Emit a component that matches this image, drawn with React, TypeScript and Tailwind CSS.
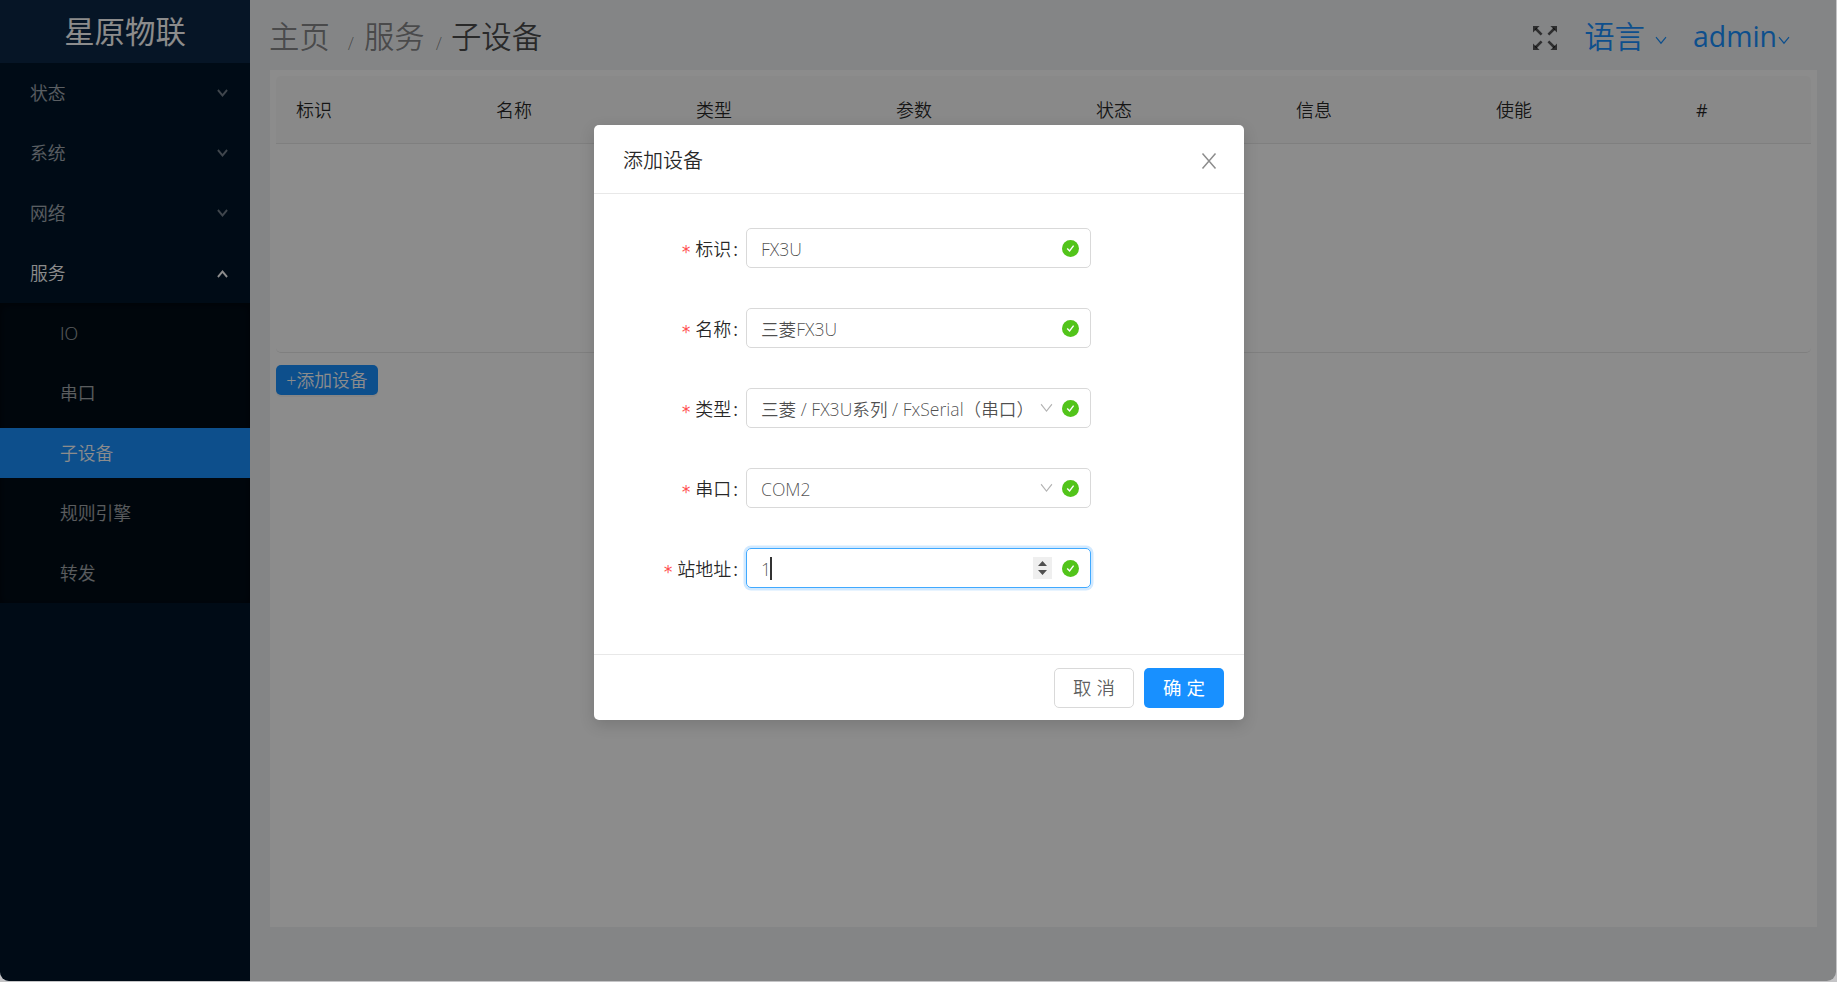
import { useState } from 'react';

const groups = ['状态', '系统', '网络'];
const subItems = ['IO', '串口', '子设备', '规则引擎', '转发'];
const columns = ['标识', '名称', '类型', '参数', '状态', '信息', '使能', '#'];

function Chevron({ className, up, strokeWidth = 2 }: { className?: string; up?: boolean; strokeWidth?: number }) {
  return (
    <svg
      viewBox="0 0 12 8"
      preserveAspectRatio="none"
      className={className}
      fill="none"
      stroke="currentColor"
      strokeWidth={strokeWidth}
    >
      <path d={up ? 'M1 7 L6 1.5 L11 7' : 'M1 1 L6 6.5 L11 1'} />
    </svg>
  );
}

function FullscreenIcon() {
  return (
    <svg viewBox="0 0 24 24" className="h-6 w-6 shrink-0" fill="currentColor" stroke="currentColor">
      {[0, 90, 180, 270].map((deg) => (
        <g key={deg} transform={`rotate(${deg} 12 12)`}>
          <path stroke="none" d="M0 0 H6.6 L0 6.6 Z" />
          <path strokeWidth="2.6" d="M2.5 2.5 L8.6 8.6" />
        </g>
      ))}
    </svg>
  );
}

function CheckCircle() {
  return (
    <svg viewBox="0 0 17 17" className="h-[17px] w-[17px] shrink-0">
      <circle cx="8.5" cy="8.5" r="8.5" fill="#52c41a" />
      <path d="M5.2 8.5 L7.6 11 L11.6 5.7" fill="none" stroke="#fff" strokeWidth="1.4" />
    </svg>
  );
}

function Field({ label, value, type }: { label: string; value: string; type?: 'select' | 'number' }) {
  const focused = type === 'number';
  return (
    <div className="flex h-10 items-center">
      <div className="flex w-[142px] items-center justify-end pt-[3px] pr-2 text-[18px] text-black/85">
        <span className="mr-[4px] pt-[5px] font-['DejaVu_Sans_Mono'] text-[17px] leading-none text-[#ff4d4f]">*</span>
        <span>{label}</span>
        <span className="ml-[2px] font-normal">:</span>
      </div>
      <div
        className={`flex h-10 w-[345px] items-center rounded-[5px] border pr-[11px] pl-[14px] ${
          focused ? 'border-[#40a9ff] shadow-[0_0_0_2.5px_rgba(24,144,255,0.2)]' : 'border-[#d9d9d9]'
        }`}
      >
        <span className="pt-[2px] text-[17.6px] whitespace-nowrap text-black/70">{value}</span>
        {focused && <span className="-ml-px h-[23px] w-[1.5px] bg-black/80" />}
        <div className="ml-auto flex items-center">
          {type === 'select' && <Chevron className="mr-[9px] h-[10px] w-[13px] text-black/30" strokeWidth={1} />}
          {focused && (
            <div className="mr-[10px] flex h-[22px] w-[19px] items-center justify-center bg-[#efefef]">
              <svg viewBox="0 0 9 14" className="h-[14px] w-[9px]" fill="#505050">
                <path d="M0 5 L4.5 0 L9 5 Z M0 9 L4.5 14 L9 9 Z" />
              </svg>
            </div>
          )}
          <CheckCircle />
        </div>
      </div>
    </div>
  );
}

function Sidebar() {
  return (
    <aside className="w-[250px] shrink-0 bg-[#001529] text-[17.8px] text-white/65">
      <div className="flex h-[63px] items-center justify-center bg-[#0c2745] pt-px text-[30.4px] font-normal text-white">
        星原物联
      </div>
      <nav>
        {groups.map((name) => (
          <div key={name} className="flex h-[60px] items-center justify-between pt-px pr-[22px] pl-[30px]">
            {name}
            <Chevron className="mb-[2px] h-[8px] w-[11px] opacity-70" />
          </div>
        ))}
        <div className="flex h-[60px] items-center justify-between pt-px pr-[22px] pl-[30px] text-white">
          服务
          <Chevron className="h-[8px] w-[11px]" up />
        </div>
        <div className="flex h-[300px] flex-col justify-around bg-[#000c17] shadow-[inset_0_2px_8px_rgba(0,0,0,0.45)]">
          {subItems.map((name) => (
            <div
              key={name}
              className={`flex h-[50px] items-center pt-px pl-[60px] ${name === '子设备' ? 'bg-[#1890ff] text-white' : ''}`}
            >
              {name}
            </div>
          ))}
        </div>
      </nav>
    </aside>
  );
}

function Header() {
  return (
    <header className="flex h-[70px] items-center pt-[3px] text-[30.4px]">
      <div className="flex items-center pl-[19px] text-black/45">
        <span>主页</span>
        <span className="mt-3.5 ml-[18px] text-[18px]">/</span>
        <span className="ml-[10px]">服务</span>
        <span className="mt-3.5 ml-[11px] text-[18px]">/</span>
        <span className="ml-[9px] text-black/70">子设备</span>
      </div>
      <div className="ml-auto flex items-center pr-[46px] text-[#1890ff]">
        <span className="mt-[3px] text-black/65">
          <FullscreenIcon />
        </span>
        <span className="ml-[27px]">语言</span>
        <Chevron className="mt-2 ml-[10px] h-[9px] w-[12px]" strokeWidth={1.2} />
        <span className="ml-[26px] font-['Open_Sans'] text-[28.4px] font-normal">admin</span>
        <Chevron className="mt-2 ml-[1px] h-[9px] w-[12px]" strokeWidth={1.2} />
      </div>
    </header>
  );
}

function DeviceTable() {
  return (
    <div className="ml-5 h-[857px] w-[1547px] bg-white p-1.5">
      <div className="flex h-[68px] items-center rounded-t-[5px] border-b border-[#e8e8e8] bg-[#fafafa] pt-px text-[18px] text-black/85">
        {columns.map((name) => (
          <div key={name} className="w-[200px] shrink-0 px-5 last:w-[135px] last:font-normal">
            {name}
          </div>
        ))}
      </div>
      <div className="h-[209px] rounded-b-[5px] border-b border-[#e8e8e8]" />
      <button className="mt-3 flex h-[30px] w-[102px] items-center justify-center rounded-[5px] bg-[#1890ff] text-[17.8px] whitespace-nowrap text-white shadow-[0_2px_0_rgba(0,0,0,0.045)]">
        +添加设备
      </button>
    </div>
  );
}

function AddDeviceModal({ onClose }: { onClose: () => void }) {
  return (
    <div className="absolute inset-0 flex items-start bg-black/45 pt-[125px] pl-[594px]">
      <div className="w-[650px] rounded-[5px] bg-white shadow-[0_5px_15px_rgba(0,0,0,0.15)]">
        <div className="flex h-[69px] items-center justify-between border-b border-[#e8e8e8] pt-[4px] pr-[27px] pl-[29px]">
          <h2 className="text-[20px] text-black/85">添加设备</h2>
          <button onClick={onClose} className="text-black/45">
            <svg viewBox="0 0 16 16" className="h-4 w-4" fill="none" stroke="currentColor" strokeWidth="1.5">
              <path d="M1.5 0.5 L14.5 15.5 M14.5 0.5 L1.5 15.5" />
            </svg>
          </button>
        </div>
        <div className="flex h-[461px] flex-col gap-10 border-b border-[#e8e8e8] pt-[34px] pl-[10px]">
          <Field label="标识" value="FX3U" />
          <Field label="名称" value="三菱FX3U" />
          <Field label="类型" value="三菱 / FX3U系列 / FxSerial（串口）" type="select" />
          <Field label="串口" value="COM2" type="select" />
          <Field label="站地址" value="1" type="number" />
        </div>
        <div className="flex h-[65px] items-center justify-end gap-[10px] pr-5 text-[18.5px]">
          <button onClick={onClose} className="h-10 w-20 rounded-[5px] border border-[#d9d9d9] text-black/65">
            取 消
          </button>
          <button onClick={onClose} className="h-10 w-20 rounded-[5px] bg-[#1890ff] font-normal text-white">
            确 定
          </button>
        </div>
      </div>
    </div>
  );
}

export default function App() {
  const [open, setOpen] = useState(true);

  return (
    <div className="h-[982px] w-[1837px] bg-[#c4c4c6] pr-px pb-px font-['Open_Sans','Noto_Sans_CJK_SC',sans-serif] font-[350]">
      <div className="relative flex h-full overflow-hidden rounded-b-[9px] bg-[#f0f2f5]">
        <Sidebar />
        <main className="flex-1">
          <Header />
          <DeviceTable />
        </main>
        {open && <AddDeviceModal onClose={() => setOpen(false)} />}
      </div>
    </div>
  );
}
